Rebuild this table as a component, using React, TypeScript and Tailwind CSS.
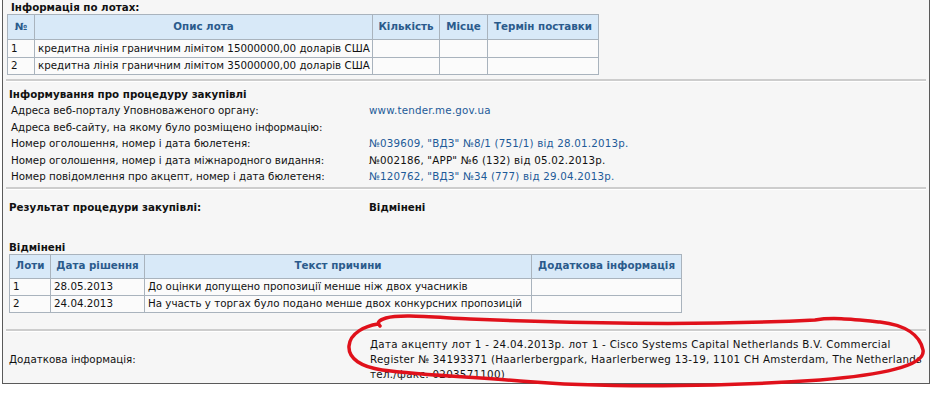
import React from 'react';

type Lot = { n: string; desc: string };
type Cancel = { lot: string; date: string; reason: string };

const lots: Lot[] = [
  { n: '1', desc: 'кредитна лінія граничним лімітом 15000000,00 доларів США' },
  { n: '2', desc: 'кредитна лінія граничним лімітом 35000000,00 доларів США' },
];

const cancels: Cancel[] = [
  { lot: '1', date: '28.05.2013', reason: 'До оцінки допущено пропозиції менше ніж двох учасників' },
  { lot: '2', date: '24.04.2013', reason: 'На участь у торгах було подано менше двох конкурсних пропозицій' },
];

const procedureRows: { label: string; value: string; link: boolean }[] = [
  { label: 'Адреса веб-порталу Уповноваженого органу:', value: 'www.tender.me.gov.ua', link: true },
  { label: 'Адреса веб-сайту, на якому було розміщено інформацію:', value: '', link: false },
  { label: 'Номер оголошення, номер і дата бюлетеня:', value: '№039609, "ВДЗ" №8/1 (751/1) від 28.01.2013р.', link: true },
  { label: 'Номер оголошення, номер і дата міжнародного видання:', value: '№002186, "APP" №6 (132) від 05.02.2013р.', link: false },
  { label: 'Номер повідомлення про акцепт, номер і дата бюлетеня:', value: '№120762, "ВДЗ" №34 (777) від 29.04.2013р.', link: true },
];

const th = 'border border-[#a9b3bd] bg-[#d8e9f8] text-[#2b5b8c] font-bold text-center px-0 whitespace-nowrap overflow-hidden';
const td = 'border border-[#a9b3bd] bg-[#fbfbfb] pl-[3px] pr-0 whitespace-nowrap overflow-hidden';

const Separator: React.FC<{ className?: string }> = ({ className }) => (
  <div className={`mx-[3px] border-t-2 border-[#cdcdcd] border-b border-b-white ${className ?? ''}`} />
);

const App: React.FC = () => {
  return (
    <div
      className="relative w-[931px] h-[396px] bg-white text-[10.3px] text-[#111] overflow-hidden"
      style={{ fontFamily: '"DejaVu Sans", Verdana, sans-serif' }}
    >
      <div className="ml-[2px] w-[928px] h-[384px] bg-[#f6f6f6] border-l border-r border-b border-[#5a5a5a]">
        {/* лоти */}
        <div className="h-[14px] leading-[15px] pl-[8px] font-bold">Інформація по лотах:</div>
        <table className="ml-[4px] w-[591px] table-fixed border-collapse">
          <colgroup>
            <col className="w-[27px]" />
            <col className="w-[338px]" />
            <col className="w-[67px]" />
            <col className="w-[48px]" />
            <col className="w-[111px]" />
          </colgroup>
          <thead>
            <tr className="h-[25px]">
              <th className={th}>№</th>
              <th className={th}>Опис лота</th>
              <th className={th}>Кількість</th>
              <th className={th}>Місце</th>
              <th className={th}>Термін поставки</th>
            </tr>
          </thead>
          <tbody>
            {lots.map((l, i) => (
              <tr key={l.n} className={i === 0 ? 'h-[18px]' : 'h-[17px]'}>
                <td className={td}>{l.n}</td>
                <td className={td}>{l.desc}</td>
                <td className={td}></td>
                <td className={td}></td>
                <td className={td}></td>
              </tr>
            ))}
          </tbody>
        </table>

        <Separator className="mt-[4px]" />

        {/* процедура */}
        <div className="mt-[5px] h-[15px] leading-[15px] pl-[6px] font-bold">Інформування про процедуру закупівлі</div>
        <div className="pl-[8px]">
          {procedureRows.map((r) => (
            <div key={r.label} className="grid grid-cols-[358px_1fr] h-[16.5px] leading-[16.5px]">
              <span className="whitespace-nowrap">{r.label}</span>
              <span className={`whitespace-nowrap tracking-[0.2px] ${r.link ? 'text-[#1d5a98]' : ''}`}>{r.value}</span>
            </div>
          ))}
        </div>

        <Separator className="mt-[2px]" />

        {/* результат */}
        <div className="mt-[9px] grid grid-cols-[360px_1fr] pl-[6px] h-[16px] leading-[16px] font-bold">
          <span>Результат процедури закупівлі:</span>
          <span>Відмінені</span>
        </div>

        <div className="mt-[25px] h-[14px] leading-[14px] pl-[6px] font-bold">Відмінені</div>
        <table className="ml-[6px] w-[672px] table-fixed border-collapse">
          <colgroup>
            <col className="w-[41px]" />
            <col className="w-[94px]" />
            <col className="w-[387px]" />
            <col className="w-[150px]" />
          </colgroup>
          <thead>
            <tr className="h-[24px]">
              <th className={th}>Лоти</th>
              <th className={th}>Дата рішення</th>
              <th className={th}>Текст причини</th>
              <th className={th}>Додаткова інформація</th>
            </tr>
          </thead>
          <tbody>
            {cancels.map((c) => (
              <tr key={c.lot} className="h-[17px]">
                <td className={td}>{c.lot}</td>
                <td className={td}>{c.date}</td>
                <td className={td}>{c.reason}</td>
                <td className={td}></td>
              </tr>
            ))}
          </tbody>
        </table>

        <Separator className="mt-[16px]" />

        {/* додаткова інформація */}
        <div className="mt-[5px] grid grid-cols-[361px_1fr] pl-[6px] leading-[15px]">
          <span className="self-center whitespace-nowrap">Додаткова інформація:</span>
          <span className="whitespace-nowrap tracking-[0.28px]">
            Дата акцепту лот 1 - 24.04.2013р. лот 1 - Cisco Systems Capital Netherlands B.V. Commercial
            <br />
            Register № 34193371 (Haarlerbergpark, Haarlerberweg 13-19, 1101 CH Amsterdam, The Netherlands
            <br />
            тел./факс: 0203571100)
          </span>
        </div>
      </div>

      {/* червоне обведення */}
      <svg className="absolute left-0 top-0 pointer-events-none" width="931" height="396" viewBox="0 0 931 396">
        <path
          d="M 378 324 C 365 326, 350 333, 349 346 C 348 359, 362 367, 382 370 C 420 375, 470 377, 520 381 C 600 388, 720 387, 820 380 C 880 375, 926 366, 923 350 C 920 335, 905 325, 880 322 C 850 319, 832 317, 815 320 C 700 326, 560 323, 470 319 C 430 317, 400 314, 386 318 C 380 320, 376 322, 380 326"
          fill="none"
          stroke="#e0111b"
          strokeWidth="3.5"
          strokeLinecap="round"
          strokeLinejoin="round"
        />
      </svg>
    </div>
  );
};

export default App;
